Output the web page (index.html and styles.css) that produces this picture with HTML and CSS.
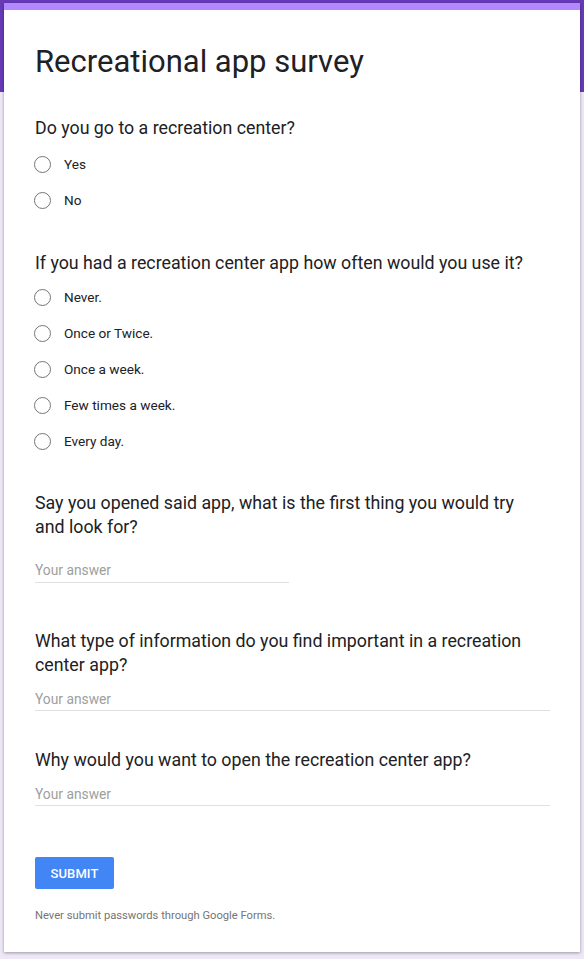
FILE: index.html
```html
<!DOCTYPE html>
<html lang="en">
<head>
<meta charset="utf-8">
<title>Recreational app survey</title>
<link rel="stylesheet" href="styles.css">
</head>
<body>
<div class="card">
  <h1 class="form-title">Recreational app survey</h1>

  <div class="question q1">
    <div class="q-title">Do you go to a recreation center?</div>
    <div class="options">
      <label class="option"><span class="radio"></span><span class="opt-text">Yes</span></label>
      <label class="option"><span class="radio"></span><span class="opt-text">No</span></label>
    </div>
  </div>

  <div class="question q2">
    <div class="q-title">If you had a recreation center app how often would you use it?</div>
    <div class="options">
      <label class="option"><span class="radio"></span><span class="opt-text">Never.</span></label>
      <label class="option"><span class="radio"></span><span class="opt-text">Once or Twice.</span></label>
      <label class="option"><span class="radio"></span><span class="opt-text">Once a week.</span></label>
      <label class="option"><span class="radio"></span><span class="opt-text">Few times a week.</span></label>
      <label class="option"><span class="radio"></span><span class="opt-text">Every day.</span></label>
    </div>
  </div>

  <div class="question q3">
    <div class="q-title">Say you opened said app, what is the first thing you would try and look for?</div>
    <div class="answer short">Your answer</div>
  </div>

  <div class="question q4">
    <div class="q-title">What type of information do you find important in a recreation center app?</div>
    <div class="answer long">Your answer</div>
  </div>

  <div class="question q5">
    <div class="q-title">Why would you want to open the recreation center app?</div>
    <div class="answer long">Your answer</div>
  </div>

  <div class="actions">
    <button class="submit" type="button">SUBMIT</button>
  </div>
  <p class="footnote">Never submit passwords through Google Forms.</p>
</div>
</body>
</html>
```

FILE: styles.css
```css
* { box-sizing: border-box; }

html, body {
  margin: 0;
  padding: 0;
}

body {
  background: linear-gradient(to bottom, #673ab7 0, #673ab7 92px, #ede7f6 92px, #ede7f6 100%);
  font-family: Roboto, "Liberation Sans", Arial, sans-serif;
  color: #202124;
  min-height: 959px;
  padding-top: 3px;
}

.card {
  margin: 0 4px;
  width: 576px;
  background: #fff;
  border-top: 7px solid #b388ff;
  box-shadow: 0 1px 3px rgba(0, 0, 0, 0.35);
  padding: 32px 30px 29px 31px;
  height: 949px;
}

.form-title {
  margin: 0;
  font-size: 31px;
  font-weight: 400;
  line-height: 40px;
  color: #202124;
}

.question { display: flex; flex-direction: column; }
.q1 { margin-top: 34px; }
.q2 { margin-top: 33px; }
.q3 { margin-top: 32px; }
.q4 { margin-top: 46px; }
.q5 { margin-top: 37px; }

.q-title {
  font-size: 17.8px;
  line-height: 24px;
  color: #202124;
  padding-right: 22px;
}

.options {
  display: flex;
  flex-direction: column;
  margin-top: 4px;
}

.q1 .options { margin-top: 6px; }

.option {
  display: flex;
  align-items: center;
  height: 36px;
}

.radio {
  width: 17px;
  height: 17px;
  border: 1px solid #757575;
  border-radius: 50%;
  margin-left: -1px;
  flex: none;
}

.opt-text {
  margin-left: 13px;
  font-size: 13.6px;
  color: #202124;
}

.answer {
  font-size: 13.8px;
  line-height: 20px;
  color: #9e9e9e;
  border-bottom: 1px solid #e0e0e0;
  padding-bottom: 2px;
}

.answer.short {
  width: 254px;
  margin-top: 21px;
}

.answer.long {
  margin-top: 12px;
  padding-bottom: 1px;
}

.actions {
  margin-top: 51px;
  display: flex;
}

.submit {
  background: #4285f4;
  color: #fff;
  border: none;
  border-radius: 2px;
  height: 32px;
  width: 79px;
  font-family: Roboto, "Liberation Sans", Arial, sans-serif;
  font-size: 13px;
  font-weight: 500;
  letter-spacing: 0.1px;
  padding: 0;
}

.footnote {
  margin: 19px 0 0;
  font-size: 11.2px;
  line-height: 16px;
  color: #757575;
}
```
